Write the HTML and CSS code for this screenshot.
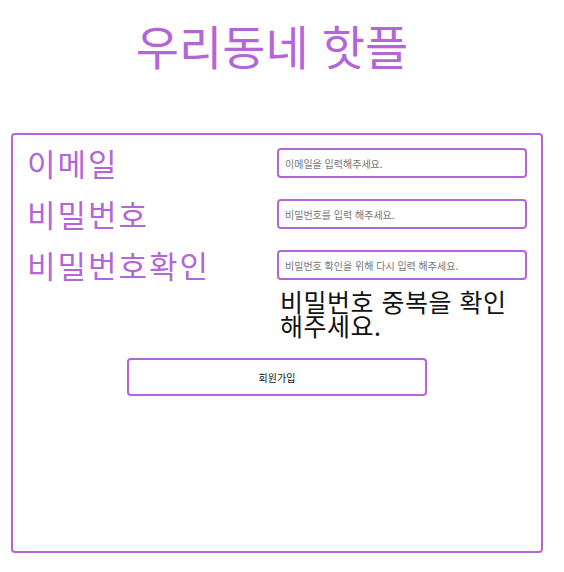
FILE: index.html
```html
<!DOCTYPE html>
<html lang="ko">
<head>
<meta charset="utf-8">
<title>우리동네 핫플 - 회원가입</title>
<link rel="stylesheet" href="styles.css">
</head>
<body>
<h1 class="title">우리동네 핫플</h1>
<form class="signup">
  <div class="row">
    <label class="label" for="email">이메일</label>
    <input class="field" id="email" type="text" placeholder="이메일을 입력해주세요.">
  </div>
  <div class="row">
    <label class="label" for="pw">비밀번호</label>
    <input class="field" id="pw" type="password" placeholder="비밀번호를 입력 해주세요.">
  </div>
  <div class="row">
    <label class="label" for="pw2">비밀번호확인</label>
    <input class="field" id="pw2" type="password" placeholder="비밀번호 확인을 위해 다시 입력 해주세요.">
  </div>
  <div class="row">
    <span class="label-spacer"></span>
    <p class="message">비밀번호 중복을 확인 해주세요.</p>
  </div>
  <div class="actions">
    <button class="submit" type="button">회원가입</button>
  </div>
</form>
</body>
</html>
```
FILE: styles.css
```css
html, body {
  margin: 0;
  padding: 0;
  background: #fff;
}

body {
  font-family: "Noto Sans CJK KR", "Noto Sans", sans-serif;
  padding: 0 0 0 11px;
  width: 532px;
}

.title {
  margin: 0;
  padding-top: 12px;
  height: 133px;
  box-sizing: border-box;
  text-align: center;
  font-size: 47px;
  font-weight: 400;
  line-height: 66px;
  color: #b466d8;
  padding-right: 10px;
}

.signup {
  box-sizing: border-box;
  width: 532px;
  height: 420px;
  border: 2px solid #b466d8;
  border-radius: 4px;
  padding: 13px 14px 0 14px;
  display: flex;
  flex-direction: column;
  gap: 21px;
}

.row {
  display: flex;
  align-items: flex-start;
}

.label,
.label-spacer {
  box-sizing: border-box;
  width: 250px;
  flex: none;
  font-size: 31px;
  letter-spacing: 2px;
  line-height: 30px;
  height: 30px;
  color: #b466d8;
  white-space: nowrap;
}

.label-spacer {
  height: 0;
}

.field {
  box-sizing: border-box;
  width: 250px;
  height: 30px;
  margin: 0;
  border: 2px solid #b466d8;
  border-radius: 4px;
  padding: 0 6px;
  font-family: "Noto Sans CJK KR", "Noto Sans", sans-serif;
  font-size: 10px;
  color: #333;
  background: #fff;
  outline: none;
}

.field::placeholder {
  color: #777;
}

.message {
  margin: -12px 0 0 3px;
  width: 250px;
  font-size: 25px;
  line-height: 24px;
  letter-spacing: 0.5px;
  color: #111;
  word-break: keep-all;
}

.actions {
  display: flex;
  justify-content: center;
  margin-top: 0;
}

.submit {
  box-sizing: border-box;
  width: 300px;
  height: 38px;
  border: 2px solid #b466d8;
  border-radius: 4px;
  background: #fff;
  font-family: "Noto Sans CJK KR", "Noto Sans", sans-serif;
  font-size: 10px;
  color: #111;
  padding: 0;
}
```
